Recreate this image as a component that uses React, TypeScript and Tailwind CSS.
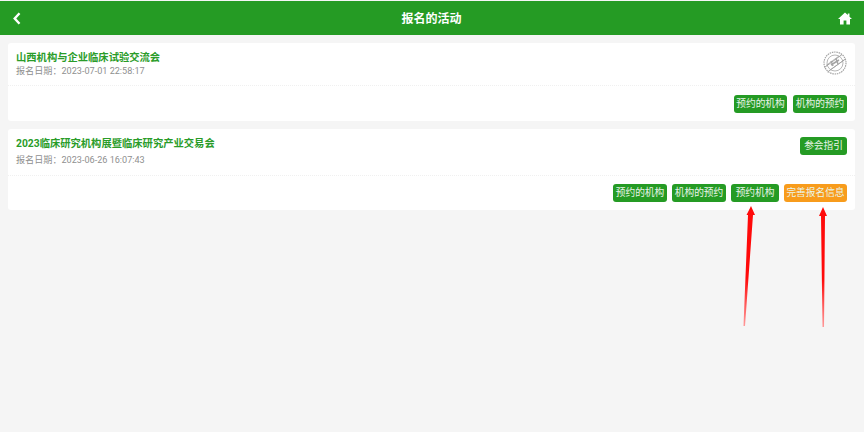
const FONT = "font-['Roboto','Noto_Sans_CJK_SC',sans-serif]";

function Btn({ label, orange, className }: { label: string; orange?: boolean; className?: string }) {
  return (
    <span
      className={`flex h-[18px] items-center justify-center rounded-[3px] text-[9.7px] leading-none text-[#eaf5ea] ${
        orange ? "bg-[#f89c1c]" : "bg-[#259b24]"
      } ${className ?? ""}`}
    >
      {label}
    </span>
  );
}

function Arrow({ d, className }: { d: string; className: string }) {
  return (
    <svg className={`absolute ${className}`} width="16" height="124" viewBox="0 0 16 124">
      <defs>
        <linearGradient id="fade" x1="0" y1="0" x2="0" y2="1">
          <stop offset="0.6" stopColor="#ff0a0a" />
          <stop offset="1" stopColor="#ff9a9a" />
        </linearGradient>
      </defs>
      <path d={d} fill="url(#fade)" />
    </svg>
  );
}

export default function App() {
  return (
    <div className={`relative h-[432px] w-[864px] overflow-hidden bg-[#f5f5f5] pt-px ${FONT}`}>
      <header className="flex h-[34px] items-center justify-between bg-[#259b24] pl-[13px] pr-[12px] text-white">
        <svg width="8" height="13" viewBox="0 0 8 13">
          <path d="M6.5 1.2 1.7 6.5l4.8 5.3" fill="none" stroke="#fff" strokeWidth="2.4" />
        </svg>
        <h1 className="ml-[4px] mt-[1px] text-[12px] font-bold">报名的活动</h1>
        <svg width="14" height="13" viewBox="0 0 14 13">
          <path d="M7 .5 0 7h2v5.5h3.6V8.6h2.8v3.9H12V7h2L11.5 4.7V1.4H9.8V3.1z" fill="#fff" />
        </svg>
      </header>

      <main className="flex flex-col gap-2 pl-2 pr-[9px] pt-2">
        <section className="h-[78px] rounded-[3px] bg-white">
          <div className="flex h-[43px] justify-between border-b border-dotted border-[#f0f0f0] pl-2 pr-[8px] pt-[8px]">
            <div>
              <h2 className="text-[10.3px] font-bold leading-[14px] text-[#2a9c29]">山西机构与企业临床试验交流会</h2>
              <p className="text-[9.1px] leading-[13px] text-[#8f8f8f]">报名日期：2023-07-01 22:58:17</p>
            </div>
            <svg width="24" height="24" viewBox="0 0 24 24" fill="none" stroke="#a4a4a4">
              <circle cx="12" cy="12" r="11" strokeWidth="1.2" strokeDasharray="1.5 0.8" />
              <circle cx="12" cy="12" r="8" strokeWidth="0.8" />
              <path d="M1.5 16.5 19 3.5M4.5 21 22.5 8" strokeWidth="1" />
              <path d="M3 14.5 16 5M7 19 21 9" strokeWidth="0.8" />
              <path d="M8 14 16 9M8 10l2 5M13 8l2 5" strokeWidth="1.5" />
            </svg>
          </div>
          <div className="flex justify-end gap-[6px] pr-2 pt-[9px]">
            <Btn label="预约的机构" className="w-[53px]" />
            <Btn label="机构的预约" className="w-[54px]" />
          </div>
        </section>

        <section className="h-[81px] rounded-[3px] bg-white">
          <div className="flex h-[47px] justify-between border-b border-dotted border-[#f0f0f0] pl-2 pr-[8px] pt-[8px]">
            <div>
              <h2 className="text-[10.3px] font-bold leading-[14px] text-[#2a9c29]">2023临床研究机构展暨临床研究产业交易会</h2>
              <p className="mt-[3px] text-[9.1px] leading-[13px] text-[#8f8f8f]">报名日期：2023-06-26 16:07:43</p>
            </div>
            <Btn label="参会指引" className="w-[47px]" />
          </div>
          <div className="flex justify-end gap-[5px] pr-2 pt-[8px]">
            <Btn label="预约的机构" className="w-[54px]" />
            <Btn label="机构的预约" className="w-[54px]" />
            <Btn label="预约机构" className="w-[48px] bg-[#35a234]" />
            <Btn label="完善报名信息" orange className="w-[63px]" />
          </div>
        </section>
      </main>

      <Arrow className="left-[743px] top-[204px]" d="M8 2 12 11 10 11 2 122 0.5 122 5 11 3.5 11z" />
      <Arrow className="left-[815px] top-[205px]" d="M8 2 12 11 10 11 9 122 7.5 122 6 11 4 11z" />
    </div>
  );
}
